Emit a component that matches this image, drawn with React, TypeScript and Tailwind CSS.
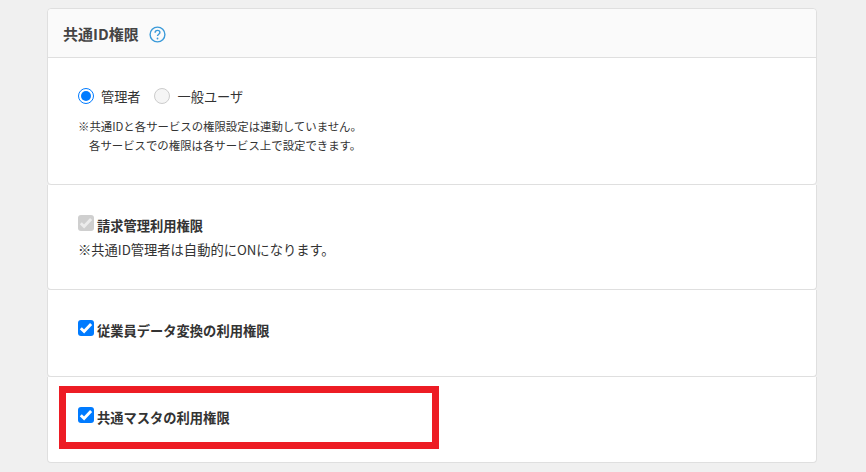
const font = { fontFamily: '"Noto Sans CJK JP", "Noto Sans", sans-serif' };

function CheckBox({ disabled }: { disabled?: boolean }) {
  return (
    <span className={`h-4 w-4 shrink-0 rounded-[3px] ${disabled ? "bg-[#cfcfcf]" : "bg-[#007bff]"}`}>
      <svg width="16" height="16" viewBox="0 0 16 16" fill="none" aria-hidden>
        <path d="M2.8 8.2l3.3 3.3 7-7.6" stroke={disabled ? "#ececec" : "#fff"} strokeWidth="2.9" />
      </svg>
    </span>
  );
}

function Permission({ label, disabled }: { label: string; disabled?: boolean }) {
  return (
    <div className="flex items-start gap-[3px]">
      <CheckBox disabled={disabled} />
      <span className="mt-[3px] text-[13.27px] leading-4 font-bold">{label}</span>
    </div>
  );
}

function Card({ className, children }: { className: string; children: React.ReactNode }) {
  return <section className={`rounded-b-[4px] border-x border-b border-[#dfdfdf] bg-white ${className}`}>{children}</section>;
}

export default function App() {
  return (
    <div className="h-[472px] w-[866px] overflow-hidden bg-[#f0f0f0] pl-[47px] pt-2 text-[#333]" style={font}>
      <div className="relative w-[770px]">
        <Card className="h-[177px] rounded-t-[4px] border-t">
          <header className="flex h-[49px] items-center gap-[10px] rounded-t-[4px] border-b border-[#dfdfdf] bg-[#fafafa] pl-[15px] pt-[2px]">
            <h2 className="text-[15px] font-bold text-[#444]">共通ID権限</h2>
            <svg width="17" height="17" viewBox="0 0 17 17" fill="none" aria-hidden>
              <circle cx="8.5" cy="8.5" r="7.4" stroke="#3a9ad9" strokeWidth="1.4" />
              <path d="M6.1 6.7c0-1.4 1-2.3 2.4-2.3s2.4.8 2.4 2.1c0 1.8-2.4 1.8-2.4 3.6" stroke="#3a9ad9" strokeWidth="1.4" />
              <circle cx="8.5" cy="12.5" r=".9" fill="#3a9ad9" />
            </svg>
          </header>
          <div className="pl-[30px] pt-[30px]">
            <div className="flex h-4 items-center text-[13.2px]">
              <span className="mr-[7px] flex h-4 w-4 items-center justify-center rounded-full border border-[#007bff] bg-white">
                <span className="h-[10px] w-[10px] rounded-full bg-[#007bff]" />
              </span>
              <span className="mt-[2px]">管理者</span>
              <span className="ml-[13px] mr-[8px] h-4 w-4 rounded-full border border-[#ccc] bg-[#f5f5f5]" />
              <span className="mt-[2px]">一般ユーザ</span>
            </div>
            <p className="mt-[13px] text-[11.4px] leading-[19px]">※共通IDと各サービスの権限設定は連動していません。</p>
            <p className="pl-[11px] text-[11.4px] leading-[19px]">各サービスでの権限は各サービス上で設定できます。</p>
          </div>
        </Card>
        <Card className="h-[105px] pl-[30px] pt-[30px]">
          <Permission label="請求管理利用権限" disabled />
          <p className="mt-[6px] text-[13.27px] leading-5">※共通ID管理者は自動的にONになります。</p>
        </Card>
        <Card className="h-[87px] pl-[30px] pt-[30px]">
          <Permission label="従業員データ変換の利用権限" />
        </Card>
        <Card className="h-[86px] pl-[30px] pt-[30px]">
          <Permission label="共通マスタの利用権限" />
        </Card>
        <div className="absolute left-3 top-[378px] h-[63px] w-[380px] border-[7px] border-[#ed1c24]" />
      </div>
    </div>
  );
}
